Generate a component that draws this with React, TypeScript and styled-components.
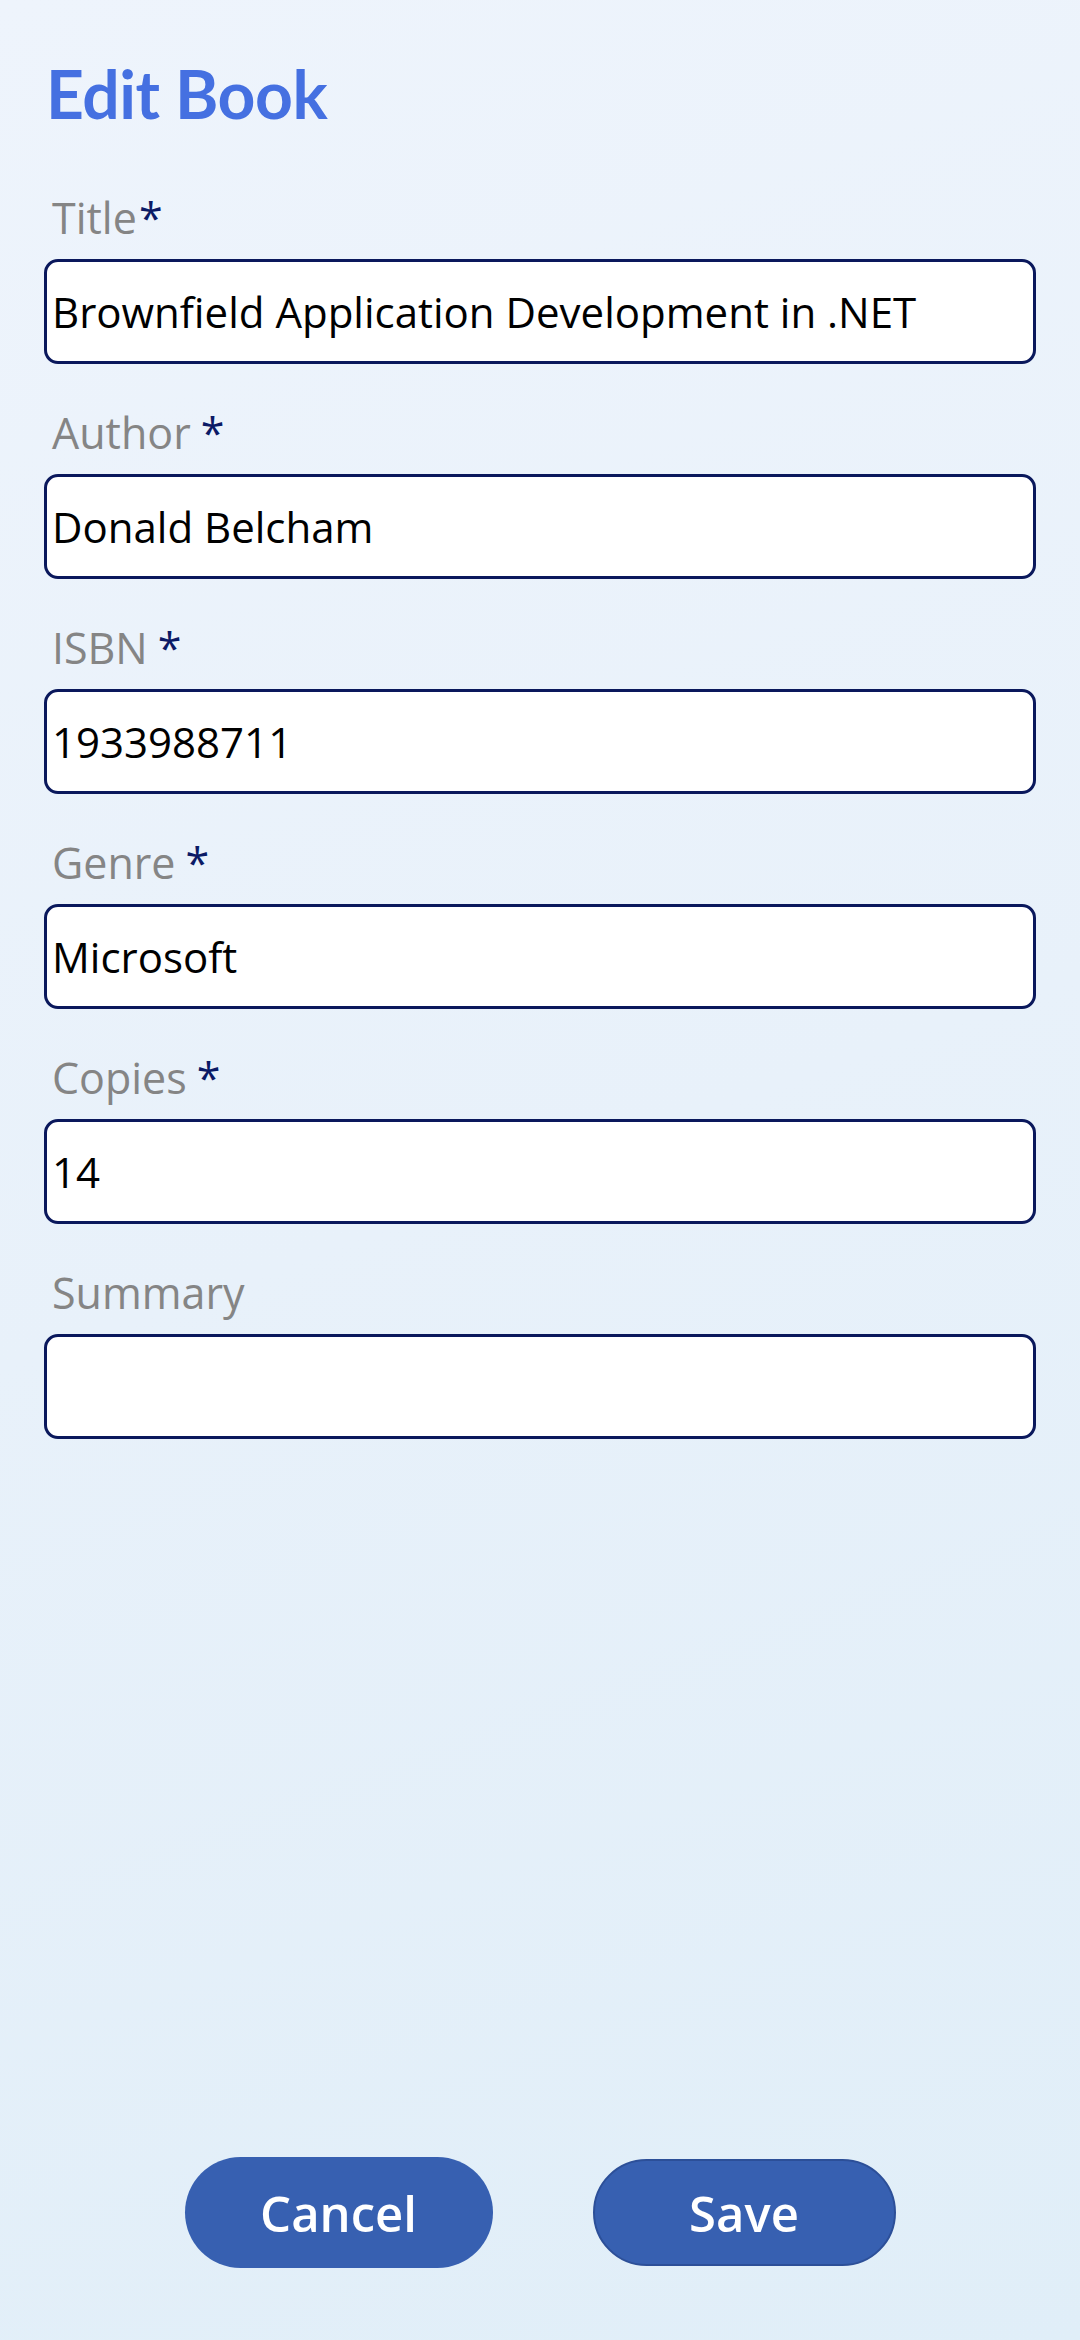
import styled, { createGlobalStyle } from "styled-components";

const GlobalStyle = createGlobalStyle`
    html, body {margin: 0; padding: 0;}
    body {font-family: "Open Sans", "Noto Sans", sans-serif;}
`;

const Page = styled.main`
    box-sizing: border-box;
    width: 1080px; height: 2340px;
    display: flex; flex-direction: column;
    padding: 0 44px 72px 44px;
    background: linear-gradient(160deg, #eef4fc 0%, #e8f1fa 50%, #e0eef8 100%);
`;

const Heading = styled.h1`
    margin: 53px 0 0 2px;
    font-family: Lato, "Liberation Sans", sans-serif;
    font-weight: 700; font-size: 66px; line-height: 82px;
    letter-spacing: -0.5px;
    color: #4570e1;
`;

const Fields = styled.div`
    display: flex; flex-direction: column; gap: 44px;
    margin-top: 58px;
`;

const Field = styled.label`
    display: flex; flex-direction: column; gap: 16px;
`;

const LabelText = styled.span`
    padding-left: 8px;
    font-size: 43px; line-height: 50px;
    color: #858585;
`;

const Star = styled.span<{ $spaced?: boolean }>`
    margin-left: ${(p) => (p.$spaced ? "10px" : "2px")};
    color: #0b1a66;
`;

const Input = styled.input`
    box-sizing: border-box;
    width: 100%; height: 105px;
    padding: 0 0 0 5px;
    border: 3px solid #0a185c; border-radius: 14px;
    background: #fff;
    font-family: "Open Sans", "Noto Sans", sans-serif;
    font-size: 42px; color: #000;
    outline: none;
`;

const Actions = styled.div`
    margin-top: auto;
    display: flex; justify-content: center; align-items: center; gap: 100px;
`;

const Button = styled.button<{ $outlined?: boolean }>`
    box-sizing: border-box;
    width: ${(p) => (p.$outlined ? "303px" : "308px")};
    height: ${(p) => (p.$outlined ? "107px" : "111px")};
    border-radius: 999px;
    border: ${(p) => (p.$outlined ? "2px solid #2c4f98" : "none")};
    background: #3760b1;
    color: #fff;
    font-family: "Open Sans", "Noto Sans", sans-serif;
    font-weight: 600; font-size: 49px;
    cursor: pointer;
`;

const fields = [
    { label: "Title", value: "Brownfield Application Development in .NET", required: true, spaced: false },
    { label: "Author", value: "Donald Belcham", required: true, spaced: true },
    { label: "ISBN", value: "1933988711", required: true, spaced: true },
    { label: "Genre", value: "Microsoft", required: true, spaced: true },
    { label: "Copies", value: "14", required: true, spaced: true },
    { label: "Summary", value: "", required: false, spaced: false },
];

export default function App() {
    return (
        <>
            <GlobalStyle />
            <Page>
                <Heading>Edit Book</Heading>
                <Fields>
                    {fields.map((f) => (
                        <Field key={f.label}>
                            <LabelText>
                                {f.label}
                                {f.required ? <Star $spaced={f.spaced}>*</Star> : null}
                            </LabelText>
                            <Input defaultValue={f.value} />
                        </Field>
                    ))}
                </Fields>
                <Actions>
                    <Button type="button">Cancel</Button>
                    <Button type="button" $outlined>Save</Button>
                </Actions>
            </Page>
        </>
    );
}
